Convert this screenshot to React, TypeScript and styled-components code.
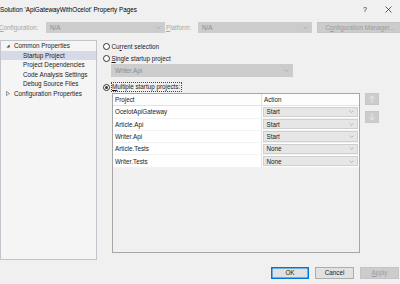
import React from "react";
import styled, { createGlobalStyle } from "styled-components";

const Global = createGlobalStyle`
  html, body { margin: 0; padding: 0; background: #f0f0f0; }
  body {
    font-family: "Liberation Sans", Arial, sans-serif;
    font-size: 6.3px;
    color: #1a1a1a;
  }
  * { box-sizing: border-box; }
`;

const Window = styled.div`
  width: 400px;
  height: 284px;
  overflow: hidden;
  display: flex;
  flex-direction: column;
  background: #f0f0f0;
`;

const TitleBar = styled.div`
  height: 18px;
  display: flex;
  align-items: center;
  flex-shrink: 0;
`;

const Title = styled.div`
  flex: 1;
  min-width: 0;
  color: #000;
  white-space: nowrap;
`;

const TitleButton = styled.div<{ $w: number }>`
  width: ${(p) => p.$w}px;
  flex-shrink: 0;
  height: 18px;
  display: flex;
  align-items: center;
  justify-content: center;
  color: #222;
  font-size: 7px;
`;

const ConfigRow = styled.div`
  margin-top: 4px;
  height: 11px;
  display: flex;
  flex-shrink: 0;
`;

const FieldLabel = styled.div<{ $w: number; $ml?: number }>`
  width: ${(p) => p.$w}px;
  margin-left: ${(p) => p.$ml ?? 0}px;
  flex-shrink: 0;
  display: flex;
  align-items: center;
  color: #a6a6a6;
  white-space: nowrap;
`;

const Combo = styled.div<{ $w: number; $tone?: "disabled" | "grid" }>`
  width: ${(p) => p.$w}px;
  flex-shrink: 0;
  height: 100%;
  display: flex;
  align-items: center;
  justify-content: space-between;
  padding: 0 3px 0 3px;
  white-space: nowrap;
  background: ${(p) => (p.$tone === "grid" ? "#e6e6e6" : "#cccccc")};
  border: 1px solid ${(p) => (p.$tone === "grid" ? "#cfcfcf" : "#cccccc")};
  color: ${(p) => (p.$tone === "grid" ? "#1a1a1a" : "#8c8c8c")};
`;

const FlatButton = styled.div<{ $w: number; $kind?: "default" | "normal" | "disabled"; $ml?: number }>`
  width: ${(p) => p.$w}px;
  margin-left: ${(p) => p.$ml ?? 0}px;
  flex-shrink: 0;
  height: 100%;
  display: flex;
  align-items: center;
  justify-content: center;
  white-space: nowrap;
  background: ${(p) => (p.$kind === "disabled" ? "#cccccc" : "#e1e1e1")};
  border: 1px solid
    ${(p) => (p.$kind === "default" ? "#0078d7" : p.$kind === "normal" ? "#adadad" : "#c4c4c4")};
  box-shadow: ${(p) => (p.$kind === "default" ? "inset 0 0 0 0.5px #0078d7" : "none")};
  color: ${(p) => (p.$kind === "disabled" ? "#9c9c9c" : "#1a1a1a")};
`;

const Body = styled.div`
  margin-top: 7px;
  height: 220px;
  display: flex;
  flex-shrink: 0;
`;

const Tree = styled.div`
  width: 97px;
  flex-shrink: 0;
  background: #f5f5f5;
  border: 1px solid #c2c6cc;
  display: flex;
  flex-direction: column;
`;

const TreeRow = styled.div<{ $indent: number; $selected?: boolean }>`
  height: 9.5px;
  display: flex;
  align-items: center;
  padding-left: ${(p) => p.$indent}px;
  background: ${(p) => (p.$selected ? "#d5dae6" : "transparent")};
  color: #1a1a1a;
  white-space: nowrap;
`;

const Expander = styled.span`
  width: 8px;
  display: flex;
  align-items: center;
  justify-content: flex-start;
`;

const RightPane = styled.div`
  margin-left: 6px;
  flex: 1;
  display: flex;
  flex-direction: column;
`;

const RadioRow = styled.div<{ $mt: number; $h: number }>`
  margin-top: ${(p) => p.$mt}px;
  height: ${(p) => p.$h}px;
  display: flex;
  align-items: center;
  white-space: nowrap;
`;

const RadioCircle = styled.span<{ $checked?: boolean }>`
  width: 7px;
  height: 7px;
  border-radius: 50%;
  border: 1px solid #333;
  background: #fff;
  display: flex;
  align-items: center;
  justify-content: center;
  margin-right: 1.5px;
  &::after {
    content: "";
    width: 3px;
    height: 3px;
    border-radius: 50%;
    background: ${(p) => (p.$checked ? "#333" : "transparent")};
  }
`;

const FocusLabel = styled.span`
  outline: 1px dotted #444;
  outline-offset: 0;
  padding: 0 1px 0 0.5px;
  line-height: 8px;
`;

const SingleComboRow = styled.div`
  margin-top: 1px;
  margin-left: 8px;
  height: 13px;
  display: flex;
`;

const GridArea = styled.div`
  margin-top: 1px;
  margin-left: 9px;
  display: flex;
  align-items: flex-start;
`;

const Grid = styled.div`
  width: 248px;
  height: 160px;
  border: 1px solid #a6a6a6;
  display: flex;
  flex-direction: column;
`;

const GridRow = styled.div<{ $header?: boolean }>`
  height: 12.3px;
  display: grid;
  grid-template-columns: 149px 1fr;
  background: ${(p) => (p.$header ? "#fdfdfd" : "#ffffff")};
  border-bottom: 1px solid ${(p) => (p.$header ? "#e2e2e2" : "#f2f2f2")};
`;

const Cell = styled.div<{ $divider?: boolean }>`
  display: flex;
  align-items: center;
  padding-left: 2px;
  border-right: ${(p) => (p.$divider ? "1px solid #e2e2e2" : "none")};
  white-space: nowrap;
`;

const ActionCell = styled.div`
  display: flex;
  padding: 0.5px 1px 0.5px 0.5px;
`;

const SideButtons = styled.div`
  margin-left: 5px;
  display: flex;
  flex-direction: column;
  gap: 6px;
`;

const MoveButton = styled.div`
  width: 14px;
  height: 12px;
  background: #cccccc;
  border: 1px solid #c6c6c6;
  display: flex;
  align-items: center;
  justify-content: center;
`;

const Footer = styled.div`
  margin-top: 7px;
  height: 11.5px;
  display: flex;
  justify-content: flex-end;
  padding-right: 1px;
  flex-shrink: 0;
`;

const Chevron = () => (
  <svg width="5" height="3" viewBox="0 0 5 3">
    <path d="M0.5 0.5 L2.5 2.5 L4.5 0.5" fill="none" stroke="#a0a0a0" strokeWidth="0.7" />
  </svg>
);

const ArrowIcon = ({ up }: { up: boolean }) => (
  <svg width="8" height="8" viewBox="0 0 8 8">
    <g fill="none" stroke="#ececec" strokeWidth="0.9">
      {up ? (
        <>
          <path d="M4 7.5 V0.8" />
          <path d="M1 3.8 L4 0.8 L7 3.8" />
        </>
      ) : (
        <>
          <path d="M4 0.5 V7.2" />
          <path d="M1 4.2 L4 7.2 L7 4.2" />
        </>
      )}
    </g>
  </svg>
);

const CloseIcon = () => (
  <svg width="7" height="7" viewBox="0 0 7 7">
    <path d="M0.5 0.5 L6.5 6.5 M6.5 0.5 L0.5 6.5" stroke="#222" strokeWidth="0.7" />
  </svg>
);

const ExpandedGlyph = () => (
  <svg width="4" height="4" viewBox="0 0 4 4">
    <path d="M3.6 0.4 V3.6 H0.4 Z" fill="#444" />
  </svg>
);

const CollapsedGlyph = () => (
  <svg width="4" height="5" viewBox="0 0 4 5">
    <path d="M0.5 0.5 L3.5 2.5 L0.5 4.5 Z" fill="none" stroke="#555" strokeWidth="0.6" />
  </svg>
);

const projects = [
  { name: "OcelotApiGateway", action: "Start" },
  { name: "Article.Api", action: "Start" },
  { name: "Writer.Api", action: "Start" },
  { name: "Article.Tests", action: "None" },
  { name: "Writer.Tests", action: "None" },
];

export default function App() {
  return (
    <>
      <Global />
      <Window>
        <TitleBar>
          <Title>Solution 'ApiGatewayWithOcelot' Property Pages</Title>
          <TitleButton $w={22}>?</TitleButton>
          <TitleButton $w={24}>
            <CloseIcon />
          </TitleButton>
        </TitleBar>

        <ConfigRow>
          <FieldLabel $w={47} $ml={-1}>
            <span>
              <u>C</u>onfiguration:
            </span>
          </FieldLabel>
          <Combo $w={119} $tone="disabled">
            <span>N/A</span>
            <Chevron />
          </Combo>
          <FieldLabel $w={32} $ml={1}>
            <span>
              <u>P</u>latform:
            </span>
          </FieldLabel>
          <Combo $w={114} $tone="disabled">
            <span>N/A</span>
            <Chevron />
          </Combo>
          <FlatButton $w={86} $ml={5} $kind="disabled">
            <span>
              C<u>o</u>nfiguration Manager...
            </span>
          </FlatButton>
        </ConfigRow>

        <Body>
          <Tree>
            <TreeRow $indent={5}>
              <Expander>
                <ExpandedGlyph />
              </Expander>
              Common Properties
            </TreeRow>
            <TreeRow $indent={22} $selected>
              Startup Project
            </TreeRow>
            <TreeRow $indent={22}>Project Dependencies</TreeRow>
            <TreeRow $indent={22}>Code Analysis Settings</TreeRow>
            <TreeRow $indent={22}>Debug Source Files</TreeRow>
            <TreeRow $indent={5}>
              <Expander>
                <CollapsedGlyph />
              </Expander>
              Configuration Properties
            </TreeRow>
          </Tree>

          <RightPane>
            <RadioRow $mt={1} $h={10}>
              <RadioCircle />
              <span>
                Cu<u>r</u>rent selection
              </span>
            </RadioRow>
            <RadioRow $mt={3} $h={9}>
              <RadioCircle />
              <span>
                <u>S</u>ingle startup project
              </span>
            </RadioRow>
            <SingleComboRow>
              <Combo $w={182} $tone="disabled">
                <span>Writer.Api</span>
                <Chevron />
              </Combo>
            </SingleComboRow>
            <RadioRow $mt={5} $h={10}>
              <RadioCircle $checked />
              <FocusLabel>
                <u>M</u>ultiple startup projects:
              </FocusLabel>
            </RadioRow>

            <GridArea>
              <Grid>
                <GridRow $header>
                  <Cell $divider>Project</Cell>
                  <Cell>Action</Cell>
                </GridRow>
                {projects.map((p) => (
                  <GridRow key={p.name}>
                    <Cell $divider>{p.name}</Cell>
                    <ActionCell>
                      <Combo $w={95} $tone="grid">
                        <span>{p.action}</span>
                        <Chevron />
                      </Combo>
                    </ActionCell>
                  </GridRow>
                ))}
              </Grid>
              <SideButtons>
                <MoveButton>
                  <ArrowIcon up />
                </MoveButton>
                <MoveButton>
                  <ArrowIcon up={false} />
                </MoveButton>
              </SideButtons>
            </GridArea>
          </RightPane>
        </Body>

        <Footer>
          <FlatButton $w={38} $kind="default">
            OK
          </FlatButton>
          <FlatButton $w={39} $ml={6} $kind="normal">
            Cancel
          </FlatButton>
          <FlatButton $w={39} $ml={6} $kind="disabled">
            <span>
              <u>A</u>pply
            </span>
          </FlatButton>
        </Footer>
      </Window>
    </>
  );
}
